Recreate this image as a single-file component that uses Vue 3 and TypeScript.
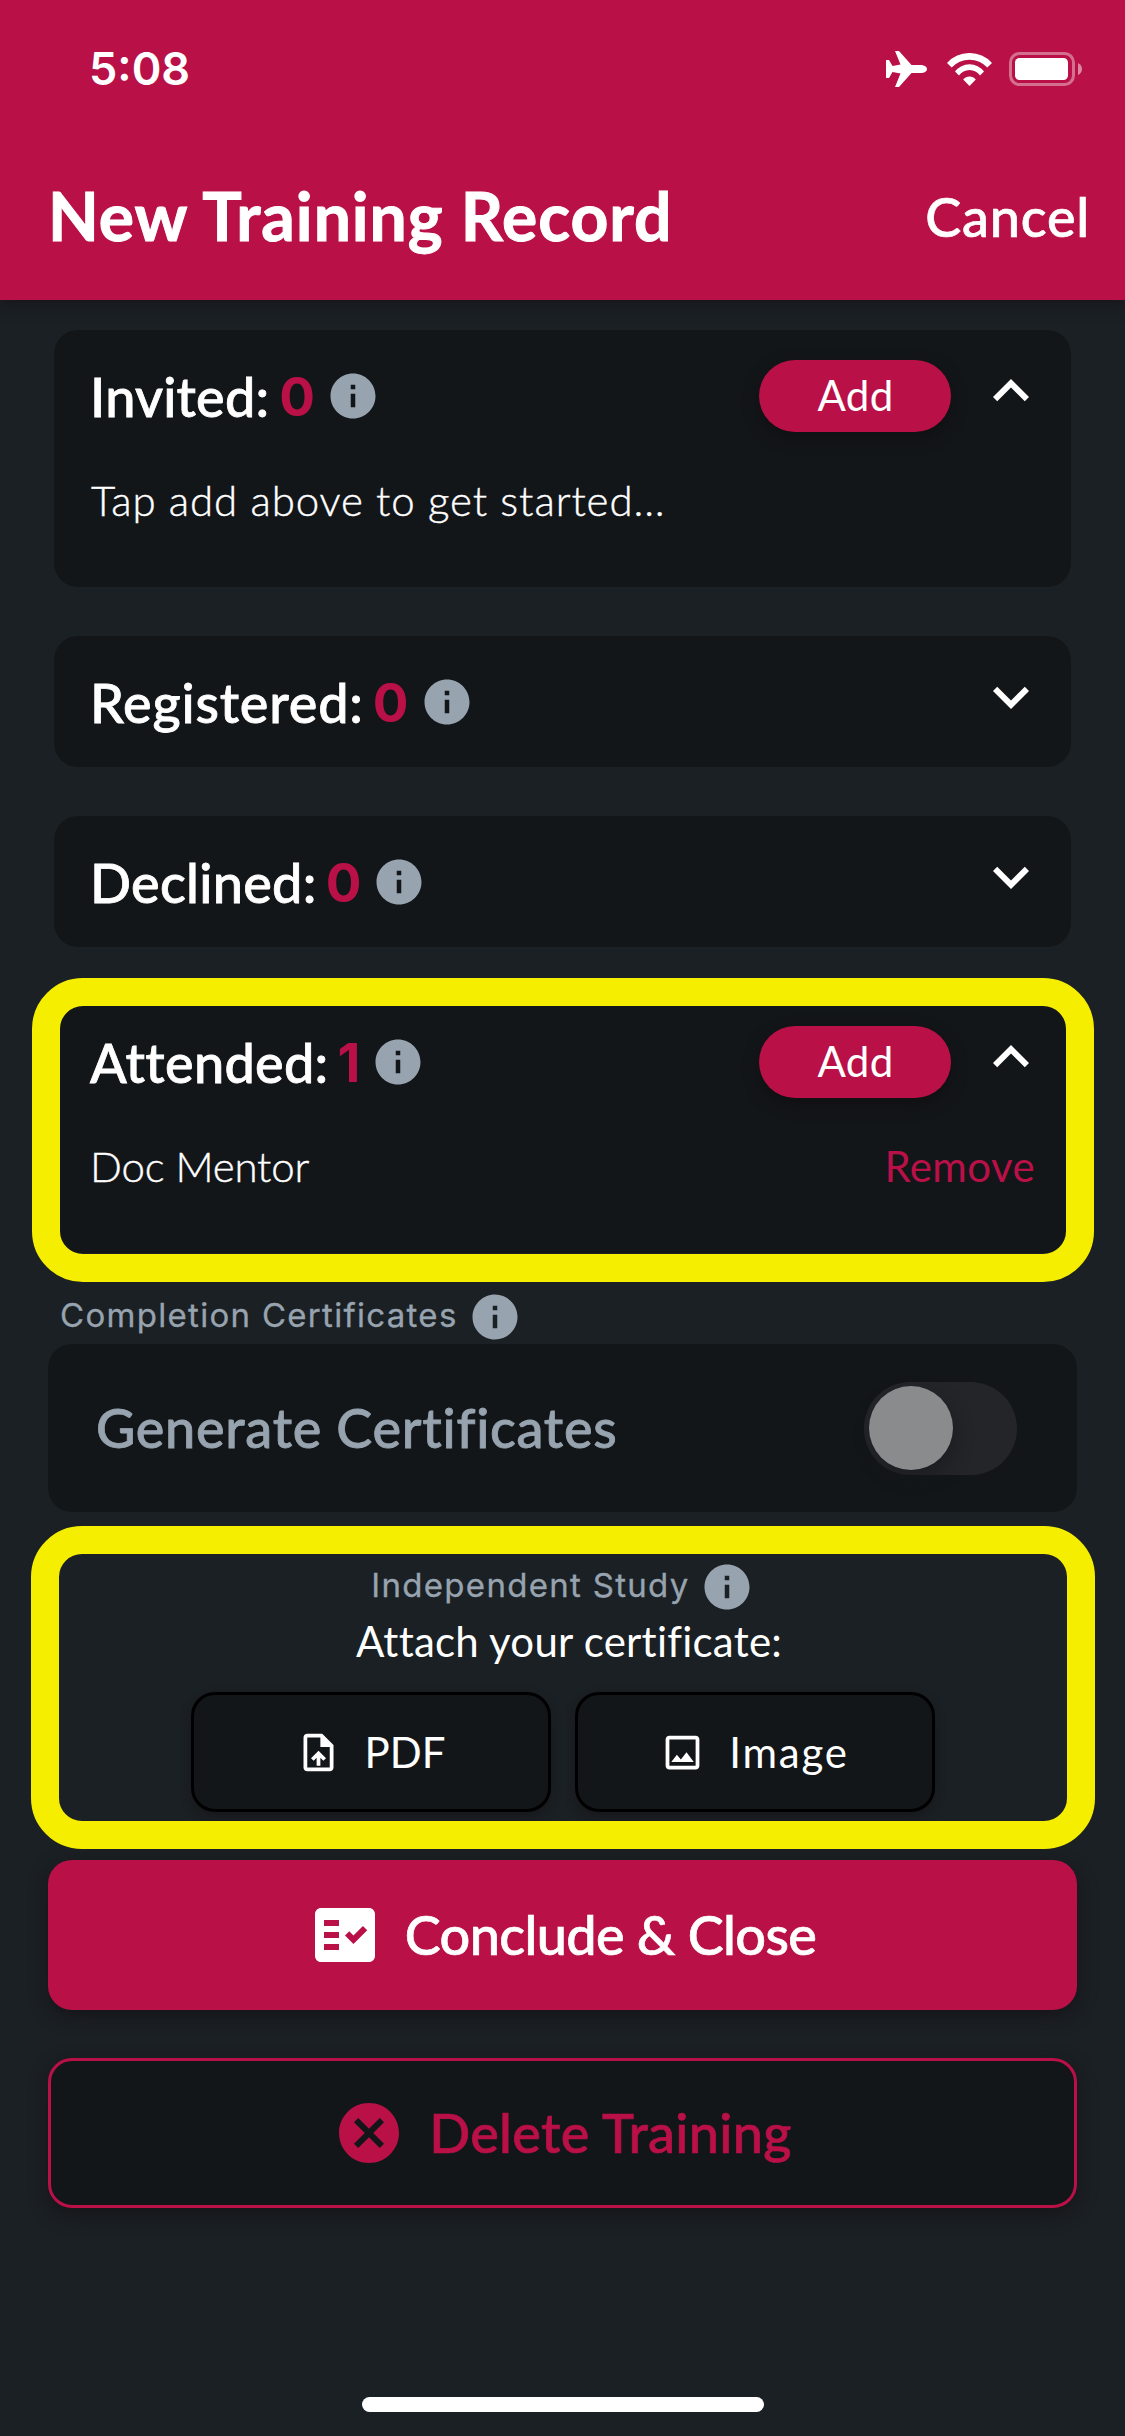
<script setup lang="ts">
import { reactive, ref } from 'vue'

interface Person {
  name: string
}

interface Section {
  id: string
  label: string
  tracking: number
  countGap: number
  open: boolean
  canAdd: boolean
  highlighted: boolean
  hint?: string
  people: Person[]
}

const icons = {
  info: 'M12 2C6.48 2 2 6.48 2 12s4.48 10 10 10 10-4.48 10-10S17.52 2 12 2zm1 15h-2v-6h2v6zm0-8h-2V7h2v2z',
  up: 'M7.41 15.41 12 10.83l4.59 4.58L18 14l-6-6-6 6z',
  down: 'M7.41 8.59 12 13.17l4.59-4.58L18 10l-6 6-6-6z',
  upload:
    'M14 2H6c-1.1 0-1.99.9-1.99 2L4 20c0 1.1.89 2 1.99 2H18c1.1 0 2-.9 2-2V8l-6-6zm4 18H6V4h7v5h5v11zM8 15.01l1.41 1.41L11 14.84V19h2v-4.16l1.59 1.59L16 15.01 12.01 11 8 15.01z',
  image:
    'M19 5v14H5V5h14m0-2H5c-1.1 0-2 .9-2 2v14c0 1.1.9 2 2 2h14c1.1 0 2-.9 2-2V5c0-1.1-.9-2-2-2zm-4.86 8.86-3 3.87L9 13.14 6 17h12l-3.86-5.14z',
  factCheck:
    'M20 3H4c-1.1 0-2 .9-2 2v14c0 1.1.9 2 2 2h16c1.1 0 2-.9 2-2V5c0-1.1-.9-2-2-2zM10 17H5v-2h5v2zm0-4H5v-2h5v2zm0-4H5V7h5v2zm4.82 6L12 12.16l1.41-1.41 1.41 1.42L17.99 9l1.42 1.42L14.82 15z',
  cancel:
    'M12 2C6.47 2 2 6.47 2 12s4.47 10 10 10 10-4.47 10-10S17.53 2 12 2zm5 13.59L15.59 17 12 13.41 8.41 17 7 15.59 10.59 12 7 8.41 8.41 7 12 10.59 15.59 7 17 8.41 13.41 12 17 15.59z',
}

const sections = reactive<Section[]>([
  {
    id: 'invited',
    label: 'Invited:',
    tracking: 0.2,
    countGap: 10,
    open: true,
    canAdd: true,
    highlighted: false,
    hint: 'Tap add above to get started...',
    people: [],
  },
  { id: 'registered', label: 'Registered:', tracking: 0.8, countGap: 9, open: false, canAdd: false, highlighted: false, people: [] },
  { id: 'declined', label: 'Declined:', tracking: 0.3, countGap: 9, open: false, canAdd: false, highlighted: false, people: [] },
  {
    id: 'attended',
    label: 'Attended:',
    tracking: 0.3,
    countGap: 9,
    open: true,
    canAdd: true,
    highlighted: true,
    people: [{ name: 'Doc Mentor' }],
  },
])

const generateCertificates = ref(false)

function remove(section: Section, index: number) {
  section.people.splice(index, 1)
}
</script>

<template>
  <div class="screen">
    <header class="header">
      <div class="status">
        <span class="clock">5:08</span>
        <div class="status-icons">
          <svg width="41" height="36" viewBox="0 0 41 36">
            <path d="M9 0h4l12.500 14H36q5 1 5 4t-5 4H25.500L13 36H9l5.500-13.500L6.500 21 3 27H0V9h3l3.500 6 8-1.500z" />
          </svg>
          <svg class="wifi" width="45" height="33" viewBox="0 0 45 33">
            <path d="M0 10A30.300 30.300 0 0 1 45 10L40.300 14.600A24 24 0 0 0 4.700 14.600Z" />
            <path d="M8 18.600A18 18 0 0 1 37 18.600L33 22.600A12.500 12.500 0 0 0 12 22.600Z" />
            <path d="M16.200 26.600A8 8 0 0 1 28.800 26.600L22.500 33Z" />
          </svg>
          <svg class="battery" width="74" height="34" viewBox="0 0 74 34">
            <rect x="1.500" y="1.500" width="63" height="31" rx="9" fill="none" stroke="#fff" stroke-width="3" opacity=".4" />
            <rect x="6" y="6" width="53" height="22" rx="4.500" />
            <path d="M69 11q4 2 4 6t-4 6z" opacity=".5" />
          </svg>
        </div>
      </div>
      <div class="titlebar">
        <h1>New Training Record</h1>
        <button class="cancel">Cancel</button>
      </div>
    </header>

    <main>
      <section
        v-for="section in sections"
        :key="section.id"
        class="card"
        :class="{ highlight: section.highlighted }"
      >
        <div class="card-head">
          <h2 :style="{ letterSpacing: section.tracking + 'px' }">{{ section.label }}</h2>
          <span class="count" :style="{ marginLeft: section.countGap + 'px' }">{{ section.people.length }}</span>
          <svg class="info" viewBox="0 0 24 24"><path :d="icons.info" /></svg>
          <div class="head-actions">
            <button v-if="section.canAdd" class="pill">Add</button>
            <svg class="chevron" viewBox="0 0 24 24" @click="section.open = !section.open">
              <path :d="section.open ? icons.up : icons.down" />
            </svg>
          </div>
        </div>
        <div v-if="section.open" class="card-body">
          <p v-if="section.people.length === 0" class="hint">{{ section.hint }}</p>
          <div v-for="(person, i) in section.people" :key="person.name" class="person">
            <span>{{ person.name }}</span>
            <button class="remove" @click="remove(section, i)">Remove</button>
          </div>
        </div>
      </section>

      <div class="caption">
        <span>Completion Certificates</span>
        <svg class="info" viewBox="0 0 24 24"><path :d="icons.info" /></svg>
      </div>
      <div class="setting">
        <span class="setting-label">Generate Certificates</span>
        <div class="toggle" :class="{ on: generateCertificates }" @click="generateCertificates = !generateCertificates">
          <div class="thumb"></div>
        </div>
      </div>

      <section class="study">
        <div class="caption centered">
          <span>Independent Study</span>
          <svg class="info" viewBox="0 0 24 24"><path :d="icons.info" /></svg>
        </div>
        <p class="attach">Attach your certificate:</p>
        <div class="files">
          <button class="file">
            <svg viewBox="0 0 24 24"><path :d="icons.upload" /></svg><span>PDF</span>
          </button>
          <button class="file">
            <svg viewBox="0 0 24 24"><path :d="icons.image" /></svg><span class="wide">Image</span>
          </button>
        </div>
      </section>

      <button class="action primary">
        <svg viewBox="0 0 24 24"><path fill-rule="evenodd" :d="icons.factCheck" /></svg>
        <span>Conclude &amp; Close</span>
      </button>
      <button class="action danger">
        <svg viewBox="0 0 24 24"><path :d="icons.cancel" /></svg>
        <span>Delete Training</span>
      </button>
    </main>

    <div class="home-indicator"></div>
  </div>
</template>

<style>
body {
  background: #1b2024;
}
</style>

<style scoped>
.screen {
  width: 1125px;
  height: 2436px;
  box-sizing: border-box;
  padding-bottom: 24px;
  display: flex;
  flex-direction: column;
  overflow: hidden;
  background: #1b2024;
  color: #fff;
  font-family: Lato, 'Open Sans', sans-serif;
}
h1,
h2,
p {
  margin: 0;
}
button {
  border: 0;
  padding: 0;
  background: none;
  color: inherit;
  font: inherit;
}
svg {
  display: block;
  flex: none;
  fill: currentColor;
}

.header {
  height: 300px;
  flex: none;
  background: #b91047;
  box-shadow: 0 3px 14px rgba(20, 16, 20, 0.7);
}
.status {
  height: 138px;
  display: flex;
  align-items: center;
  justify-content: space-between;
  padding: 0 42px 0 89px;
}
.clock {
  font: 600 45px/54px Inter, sans-serif;
}
.status-icons {
  display: flex;
  align-items: center;
}
.wifi {
  margin-left: 20px;
}
.battery {
  margin-left: 17px;
}
.titlebar {
  height: 155px;
  display: flex;
  align-items: center;
  justify-content: space-between;
  padding: 0 35px 0 48px;
}
h1 {
  font-size: 66px;
  font-weight: 700;
  line-height: 80px;
  letter-spacing: 1px;
  -webkit-text-stroke: 1px currentColor;
}
.cancel {
  margin-top: 2px;
  font-size: 54px;
  font-weight: 500;
  line-height: 66px;
  letter-spacing: 0.8px;
  -webkit-text-stroke: 0.7px currentColor;
}

main {
  display: flex;
  flex-direction: column;
  padding: 30px 48px 0;
}
.card {
  position: relative;
  margin: 0 6px 49px;
  border-radius: 24px;
  background: #131619;
}
.highlight {
  margin-bottom: 0;
}
.highlight::after {
  content: '';
  position: absolute;
  left: -22.5px;
  top: -18.5px;
  width: 1062.500px;
  height: 304.5px;
  box-sizing: border-box;
  border: 28px solid #f6ee00;
  border-radius: 51px;
  pointer-events: none;
}
.card-head {
  height: 131px;
  display: flex;
  align-items: center;
  padding: 0 24px 0 36px;
}
h2 {
  margin-top: 2px;
  font-size: 54px;
  font-weight: 500;
  line-height: 66px;
  -webkit-text-stroke: 0.8px currentColor;
}
.count {
  margin-top: 2px;
  color: #b91047;
  font: 700 53px/66px Inter, sans-serif;
}
.info {
  width: 54px;
  height: 54px;
  fill: #97a3af;
}
.card-head .info {
  margin-left: 11px;
}
.head-actions {
  margin-left: auto;
  display: flex;
  align-items: center;
  gap: 24px;
}
.pill {
  width: 192px;
  height: 72px;
  border-radius: 36px;
  background: #b91047;
  box-shadow: 0 6px 15px rgba(16, 14, 16, 0.8);
  font-size: 42px;
  font-weight: 400;
  line-height: 71px;
  letter-spacing: 0.4px;
  text-indent: 1px;
}
.chevron {
  width: 72px;
  height: 72px;
  margin-bottom: 5px;
  margin-top: -5px;
}
.card-body {
  height: 126px;
  padding: 0 36px;
}
.hint,
.person {
  font-size: 42px;
  font-weight: 300;
  line-height: 79px;
  -webkit-text-stroke: 0.4px currentColor;
}
.hint {
  padding-left: 1px;
  letter-spacing: 0.9px;
}
.person {
  display: flex;
  justify-content: space-between;
  letter-spacing: -0.2px;
}
.remove {
  color: #b91047;
  font-weight: 400;
  letter-spacing: 0.4px;
  -webkit-text-stroke: 0;
}

.caption {
  height: 54px;
  margin-top: 37px;
  padding-left: 12px;
  display: flex;
  align-items: center;
  gap: 10px;
  color: #97a3af;
  font: 400 33px/50px Inter, sans-serif;
  letter-spacing: 1.3px;
  -webkit-text-stroke: 0.3px currentColor;
}
.caption span {
  margin-bottom: 4px;
}
.centered {
  margin-top: 0;
  padding-left: 0;
  justify-content: center;
}
.setting {
  height: 168px;
  display: flex;
  align-items: center;
  justify-content: space-between;
  padding: 0 60px 0 48px;
  border-radius: 24px;
  background: #131619;
}
.setting-label {
  margin-bottom: 1px;
  color: #97a3af;
  font-size: 54px;
  font-weight: 500;
  letter-spacing: 0.7px;
  -webkit-text-stroke: 0.8px currentColor;
}
.toggle {
  width: 153px;
  height: 93px;
  box-sizing: border-box;
  padding: 4.5px;
  border-radius: 47px;
  background: #242529;
  display: flex;
}
.toggle.on {
  justify-content: flex-end;
}
.thumb {
  width: 84px;
  height: 84px;
  border-radius: 50%;
  background: #8a8b8d;
  box-shadow: 3px 8px 16px rgba(19, 22, 25, 0.5);
}

.study {
  position: relative;
  margin-top: 48px;
}
.study::after {
  content: '';
  position: absolute;
  left: -17px;
  top: -34.5px;
  width: 1063.5px;
  height: 323.5px;
  box-sizing: border-box;
  border: 28px solid #f6ee00;
  border-radius: 51px;
  pointer-events: none;
}
.attach {
  padding: 1px 0 0 13px;
  font-size: 42px;
  line-height: 52px;
  letter-spacing: 0.25px;
  text-align: center;
}
.files {
  display: flex;
  justify-content: center;
  gap: 24px;
  margin-top: 25px;
}
.file {
  width: 360px;
  height: 120px;
  box-sizing: border-box;
  border: 3px solid #000;
  border-radius: 24px;
  background: #131619;
  box-shadow: 0 5px 10px rgba(20, 16, 20, 0.5);
  display: flex;
  align-items: center;
  justify-content: center;
  gap: 24px;
  font-size: 42px;
}
.file svg {
  width: 45px;
  height: 45px;
}
.wide {
  letter-spacing: 1.8px;
}

.action {
  height: 150px;
  box-sizing: border-box;
  margin-top: 48px;
  border-radius: 24px;
  box-shadow: 0 6px 18px rgba(20, 16, 20, 0.7);
  display: flex;
  align-items: center;
  justify-content: center;
  gap: 24px;
  font-size: 54px;
  font-weight: 500;
  -webkit-text-stroke: 0.7px currentColor;
}
.action svg {
  width: 72px;
  height: 72px;
}
.action span {
  margin-bottom: 1px;
}
.primary {
  background: #b91047;
}
.primary span {
  letter-spacing: -0.65px;
}
.danger {
  border: 3px solid #b91047;
  background: #131619;
  color: #b91047;
}
.danger span {
  letter-spacing: 0.3px;
}

.home-indicator {
  flex: none;
  width: 402px;
  height: 15px;
  margin: auto auto 0;
  border-radius: 8px;
  background: #fff;
}
</style>
